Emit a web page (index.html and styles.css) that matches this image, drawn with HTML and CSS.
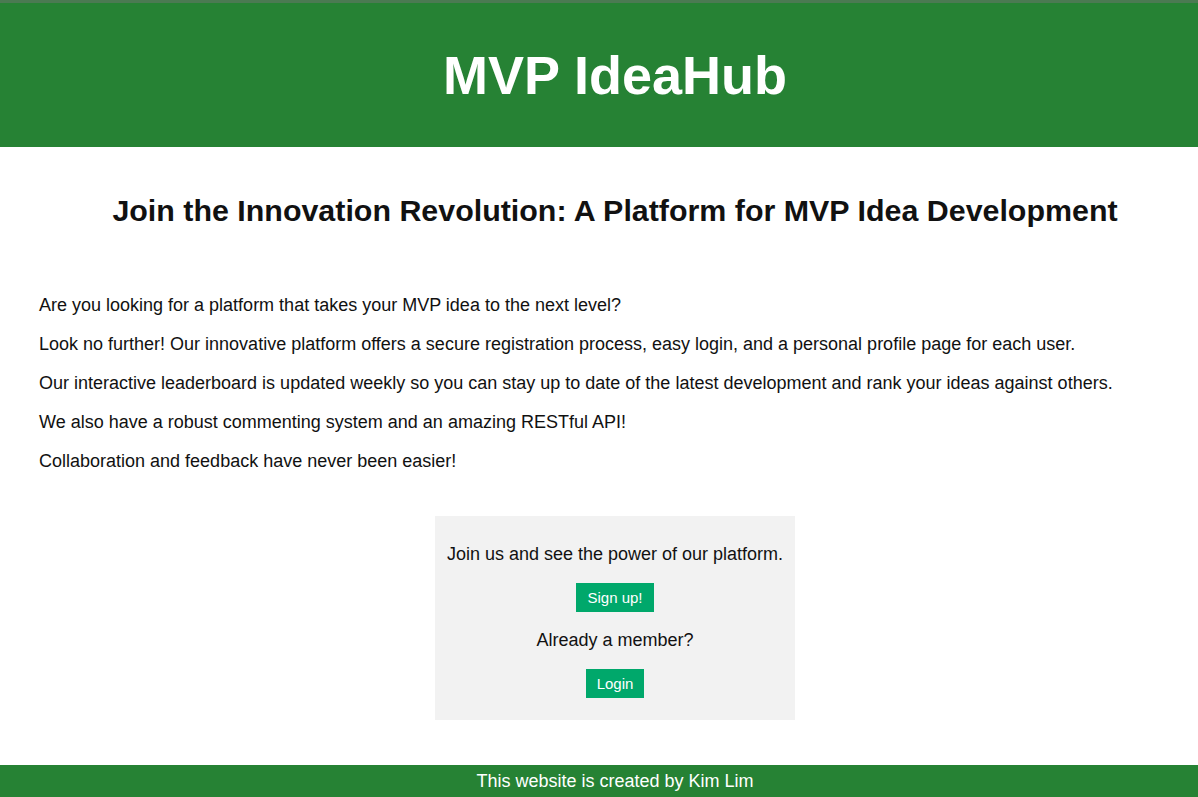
FILE: index.html
```html
<!DOCTYPE html>
<html lang="en">
<head>
<meta charset="utf-8">
<title>MVP IdeaHub</title>
<link rel="stylesheet" href="styles.css">
</head>
<body>
<header class="site-header">
  <h1 class="site-title">MVP IdeaHub</h1>
</header>
<main class="content">
  <h2 class="headline">Join the Innovation Revolution: A Platform for MVP Idea Development</h2>
  <section class="intro">
    <p>Are you looking for a platform that takes your MVP idea to the next level?</p>
    <p>Look no further! Our innovative platform offers a secure registration process, easy login, and a personal profile page for each user.</p>
    <p>Our interactive leaderboard is updated weekly so you can stay up to date of the latest development and rank your ideas against others.</p>
    <p>We also have a robust commenting system and an amazing RESTful API!</p>
    <p>Collaboration and feedback have never been easier!</p>
  </section>
  <section class="cta">
    <p>Join us and see the power of our platform.</p>
    <a class="btn" href="#">Sign up!</a>
    <p>Already a member?</p>
    <a class="btn" href="#">Login</a>
  </section>
</main>
<footer class="site-footer">This website is created by Kim Lim</footer>
</body>
</html>
```
FILE: styles.css
```css
* { box-sizing: border-box; }
html, body { margin: 0; padding: 0; }
body {
  font-family: "Liberation Sans", Arial, sans-serif;
  color: #111;
  background: #fff;
  min-height: 797px;
  display: flex;
  flex-direction: column;
}
.site-header {
  background: #268234;
  border-top: 3px solid #4b7a52;
  height: 147px;
  display: flex;
  align-items: center;
  justify-content: center;
  padding-left: 32px;
}
.site-title {
  margin: 0;
  color: #fff;
  font-size: 54px;
  font-weight: bold;
}
.content {
  flex: 1;
  padding: 0 7px 0 39px;
  display: flex;
  flex-direction: column;
}
.headline {
  text-align: center;
  font-size: 30.4px;
  margin: 46px 0 67px;
}
.intro p {
  font-size: 18px;
  margin: 0 0 18px;
  line-height: 21px;
}
.cta {
  align-self: center;
  width: 360px;
  background: #f2f2f2;
  text-align: center;
  padding: 10px 4px 22px;
  margin-top: 26px;
  display: flex;
  flex-direction: column;
  align-items: center;
}
.cta p {
  font-size: 18px;
  margin: 18px 0;
  line-height: 21px;
  white-space: nowrap;
}
.btn {
  display: inline-block;
  background: #00a86b;
  color: #fff;
  text-decoration: none;
  font-size: 15px;
  line-height: 17px;
  padding: 6px 11px;
}
.site-footer {
  margin-top: 45px;
  background: #268234;
  color: #fff;
  text-align: center;
  font-size: 18px;
  height: 32px;
  line-height: 32px;
  padding-left: 32px;
}
```
